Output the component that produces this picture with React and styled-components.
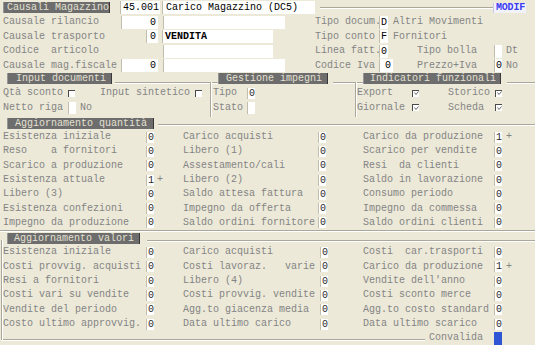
import React from 'react'
import styled, { createGlobalStyle } from 'styled-components'

const GlobalStyle = createGlobalStyle`
  html, body {
    margin: 0;
    padding: 0;
    background: #ece9d8;
  }
`

const Screen = styled.div`
  width: 535px;
  height: 345px;
  overflow: hidden;
  background: #ece9d8;
  font-family: "Liberation Mono", "Courier New", monospace;
  font-size: 10px;
  line-height: 12px;
  color: #848484;
  display: flex;
  flex-direction: column;
`

const Top = styled.div`
  flex: none;
  display: flex;
  flex-direction: column;
  padding-left: 3px;
`

const Row = styled.div`
  flex: none;
  display: flex;
  align-items: center;
  height: ${p => p.$h || 14.5}px;
`

const Label = styled.span`
  flex: none;
  width: ${p => (p.$w ? `${p.$w}px` : 'auto')};
  white-space: pre;
`

const Gap = styled.span`
  flex: none;
  width: ${p => p.$w}px;
`

const Field = styled.div`
  flex: none;
  box-sizing: border-box;
  width: ${p => p.$w}px;
  height: ${p => p.$h || 13}px;
  padding: 0 ${p => (p.$pad != null ? p.$pad : 2)}px;
  background: #fff;
  border-left: 1px solid #c2bead;
  color: ${p => (p.$dim ? '#2a2a2a' : '#000')};
  font-weight: ${p => (p.$bold ? 'bold' : 'normal')};
  line-height: ${p => p.$h || 13}px;
  text-align: ${p => p.$align || 'left'};
  white-space: pre;
  overflow: hidden;
`

const Legend = styled.div`
  flex: none;
  box-sizing: border-box;
  width: ${p => p.$w}px;
  height: 11px;
  margin-top: ${p => p.$top || 0}px;
  padding-left: ${p => p.$pad || 6}px;
  background: #6d6d6d;
  border-left: 1px solid #969696;
  border-right: 1px solid #383838;
  color: #e4e0d2;
  line-height: 11px;
  white-space: pre;
  overflow: hidden;
`

const Rule = styled.div`
  flex: ${p => (p.$w ? `0 0 ${p.$w}px` : '1 1 auto')};
  height: 0;
  margin-top: ${p => p.$y || 0}px;
  margin-left: ${p => p.$ml || 0}px;
  margin-right: ${p => p.$mr || 0}px;
  border-top: 1px solid #aca899;
  border-bottom: 1px solid #fff;
`

const Modif = styled.div`
  flex: none;
  box-sizing: border-box;
  width: 33px;
  height: 10px;
  padding-left: 2px;
  background: #f2f2fb;
  border-left: 1px solid #c8c8e8;
  color: #3c3cf0;
  line-height: 10px;
  font-weight: bold;
  letter-spacing: -0.2px;
`

const Band = styled.div`
  flex: none;
  display: flex;
  height: ${p => p.$h}px;
`

const Group = styled.div`
  position: relative;
  flex: ${p => (p.$fixed ? 'none' : p.$w ? `0 0 ${p.$w}px` : '1 1 auto')};
  display: flex;
  flex-direction: column;

  &::before {
    content: '';
    display: ${p => (p.$edge ? 'block' : 'none')};
    position: absolute;
    left: ${p => p.$edgeX || 0}px;
    top: ${p => p.$edgeTop || 9}px;
    bottom: ${p => p.$edgeBottom || 0}px;
    border-left: 1px solid #aca899;
    border-right: 1px solid #fff;
  }
`

const Head = styled.div`
  flex: none;
  display: flex;
  align-items: flex-start;
  height: ${p => p.$h}px;
`

const Body = styled.div`
  display: flex;
  flex-direction: column;
  padding-top: ${p => p.$top || 0}px;
  padding-left: ${p => p.$left || 0}px;
`

const CheckBox = styled.span`
  flex: none;
  box-sizing: border-box;
  width: 7px;
  height: 7px;
  background: #fff;
  border-top: 1px solid #4a4a4a;
  border-left: 1px solid #4a4a4a;
  display: flex;
  align-items: center;
  justify-content: center;
`

const Check = ({ on }) => (
  <CheckBox>
    {on && (
      <svg width="5" height="5" viewBox="0 0 5 5">
        <path d="M0.5 1.5 L2 3.5 L4.5 0.5" stroke="#6a6a6a" strokeWidth="1" fill="none" />
      </svg>
    )}
  </CheckBox>
)

const Grid = styled.div`
  display: grid;
  grid-template-columns: ${p => p.$cols};
  grid-auto-rows: ${p => p.$rh}px;
  align-items: center;
  padding-left: 3px;
`

const Plus = styled.span`
  padding-left: ${p => p.$pad || 3}px;
`

const Footer = styled.div`
  flex: 1 1 auto;
  display: flex;
  align-items: center;
`

const FooterRule = styled(Rule)`
  align-self: flex-end;
  margin-bottom: 4px;
`

const Submit = styled.div`
  flex: none;
  width: 8px;
  height: 13px;
  background: #2f55d4;
  align-self: flex-end;
`

const qty = [
  ['Esistenza iniziale', '0', '', 'Carico acquisti', '0', 'Carico da produzione', '1', '+'],
  ['Reso    a fornitori', '0', '', 'Libero (1)', '0', 'Scarico per vendite', '0', ''],
  ['Scarico a produzione', '0', '', 'Assestamento/cali', '0', 'Resi  da clienti', '0', ''],
  ['Esistenza attuale', '1', '+', 'Libero (2)', '0', 'Saldo in lavorazione', '0', ''],
  ['Libero (3)', '0', '', 'Saldo attesa fattura', '0', 'Consumo periodo', '0', ''],
  ['Esistenza confezioni', '0', '', 'Impegno da offerta', '0', 'Impegno da commessa', '0', ''],
  ['Impegno da produzione', '0', '', 'Saldo ordini fornitore', '0', 'Saldo ordini clienti', '0', ''],
]

const val = [
  ['Esistenza iniziale', '0', '', 'Carico acquisti', '0', 'Costi  car.trasporti', '0', ''],
  ['Costi provvig. acquisti', '0', '', 'Costi lavoraz.   varie', '0', 'Carico da produzione', '1', '+'],
  ['Resi a fornitori', '0', '', 'Libero (4)', '0', "Vendite dell'anno", '0', ''],
  ['Costi vari su vendite', '0', '', 'Costi provvig. vendite', '0', 'Costi sconto merce', '0', ''],
  ['Vendite del periodo', '0', '', 'Agg.to giacenza media', '0', 'Agg.to costo standard', '0', ''],
  ['Costo ultimo approvvig.', '0', '', 'Data ultimo carico', '0', 'Data ultimo scarico', '0', ''],
]

const QTY_COLS = '143px 8px 29px 135px 8px 37px 131px 8px auto'
const VAL_COLS = '143px 8px 29px 137px 8px 35px 131px 8px auto'

const ValueRows = ({ rows }) =>
  rows.map((r, i) => (
    <React.Fragment key={i}>
      <Label>{r[0]}</Label>
      <Field $w={8} $h={11} $pad={1} $dim>{r[1]}</Field>
      <Plus $pad={3}>{r[2]}</Plus>
      <Label>{r[3]}</Label>
      <Field $w={8} $h={11} $pad={1} $dim>{r[4]}</Field>
      <span />
      <Label>{r[5]}</Label>
      <Field $w={8} $h={11} $pad={1} $dim>{r[6]}</Field>
      <Plus $pad={4}>{r[7]}</Plus>
    </React.Fragment>
  ))

export default function App() {
  return (
    <Screen>
      <GlobalStyle />

      <Top>
        <Row $h={15}>
          <Legend $w={107} $pad={3}>Causali Magazzino</Legend>
          <Gap $w={10} />
          <Field $w={40}>45.001</Field>
          <Gap $w={2} />
          <Field $w={153} $pad={3}>Carico Magazzino (DC5)</Field>
          <Rule $ml={5} />
          <Modif>MODIF</Modif>
          <Gap $w={9} />
        </Row>
        <Row>
          <Label $w={118}>Causale rilancio</Label>
          <Field $w={37} $align="right">0</Field>
          <Gap $w={5} />
          <Field $w={122} />
          <Gap $w={30} />
          <Label $w={64}>Tipo docum.</Label>
          <Field $w={9} $pad={1}>D</Field>
          <Gap $w={5} />
          <Label>Altri Movimenti</Label>
        </Row>
        <Row>
          <Label $w={143}>Causale trasporto</Label>
          <Field $w={12} $align="right">0</Field>
          <Gap $w={4} />
          <Field $w={111} $bold>VENDITA</Field>
          <Gap $w={42} />
          <Label $w={64}>Tipo conto</Label>
          <Field $w={9} $pad={1}>F</Field>
          <Gap $w={5} />
          <Label>Fornitori</Label>
        </Row>
        <Row>
          <Label $w={160}>Codice  articolo</Label>
          <Field $w={110} />
          <Gap $w={42} />
          <Label $w={64}>Linea fatt.</Label>
          <Field $w={9} $pad={1}>0</Field>
          <Gap $w={29} />
          <Label $w={77}>Tipo bolla</Label>
          <Field $w={8} $pad={1} />
          <Gap $w={4} />
          <Label>Dt</Label>
        </Row>
        <Row>
          <Label $w={118}>Causale mag.fiscale</Label>
          <Field $w={37} $align="right">0</Field>
          <Gap $w={5} />
          <Field $w={122} />
          <Gap $w={30} />
          <Label $w={64}>Codice Iva</Label>
          <Field $w={14} $align="right" $pad={2}>0</Field>
          <Gap $w={24} />
          <Label $w={77}>Prezzo+Iva</Label>
          <Field $w={8} $pad={1}>0</Field>
          <Gap $w={4} />
          <Label>No</Label>
        </Row>
      </Top>

      <Band $h={44}>
        <Group $w={210}>
          <Head $h={12}>
            <Gap $w={7} />
            <Legend $w={105} $pad={8}>Input documenti</Legend>
            <Rule $y={9} $ml={3} />
          </Head>
          <Body $top={1} $left={3}>
            <Row>
              <Label $w={65}>Qtà sconto</Label>
              <Check />
              <Gap $w={25} />
              <Label $w={95}>Input sintetico</Label>
              <Check />
            </Row>
            <Row>
              <Label $w={65}>Netto riga</Label>
              <Field $w={8} $h={12} $pad={1} />
              <Gap $w={4} />
              <Label>No</Label>
            </Row>
          </Body>
        </Group>

        <Group $w={145} $edge>
          <Head $h={12}>
            <Rule $w={8} $y={9} />
            <Legend $w={110} $pad={7}>Gestione impegni</Legend>
            <Rule $y={9} $ml={5} />
          </Head>
          <Body $top={1} $left={3}>
            <Row>
              <Label $w={34}>Tipo</Label>
              <Field $w={8} $h={11} $pad={1} $dim>0</Field>
            </Row>
            <Row>
              <Label $w={34}>Stato</Label>
              <Field $w={8} $h={12} $pad={1} />
            </Row>
          </Body>
        </Group>

        <Group $edge>
          <Head $h={12}>
            <Rule $w={8} $y={9} />
            <Legend $w={138} $pad={6}>Indicatori funzionali</Legend>
            <Rule $y={9} $ml={6} />
          </Head>
          <Body $top={1} $left={2}>
            <Row>
              <Label $w={55}>Export</Label>
              <Check on />
              <Gap $w={29} />
              <Label $w={47}>Storico</Label>
              <Check on />
            </Row>
            <Row>
              <Label $w={55}>Giornale</Label>
              <Check on />
              <Gap $w={29} />
              <Label $w={47}>Scheda</Label>
              <Check on />
            </Row>
          </Body>
        </Group>
      </Band>

      <Group $fixed>
        <Head $h={13}>
          <Gap $w={7} />
          <Legend $w={147} $top={1} $pad={7}>Aggiornamento quantità</Legend>
          <Rule $y={7} $ml={4} />
        </Head>
        <Grid $cols={QTY_COLS} $rh={14.3}>
          <ValueRows rows={qty} />
        </Grid>
        <Rule />
      </Group>

      <Group $edge $edgeX={1} $edgeTop={8} $edgeBottom={5}>
        <Head $h={13}>
          <Gap $w={7} />
          <Legend $w={133} $top={1} $pad={6}>Aggiornamento valori</Legend>
          <Rule $y={8} $ml={7} />
        </Head>
        <Grid $cols={VAL_COLS} $rh={14.4}>
          <ValueRows rows={val} />
        </Grid>
        <Footer>
          <FooterRule $ml={1} />
          <Gap $w={4} />
          <Label>Convalida</Label>
          <Gap $w={11} />
          <Submit />
          <Gap $w={33} />
        </Footer>
      </Group>
    </Screen>
  )
}
